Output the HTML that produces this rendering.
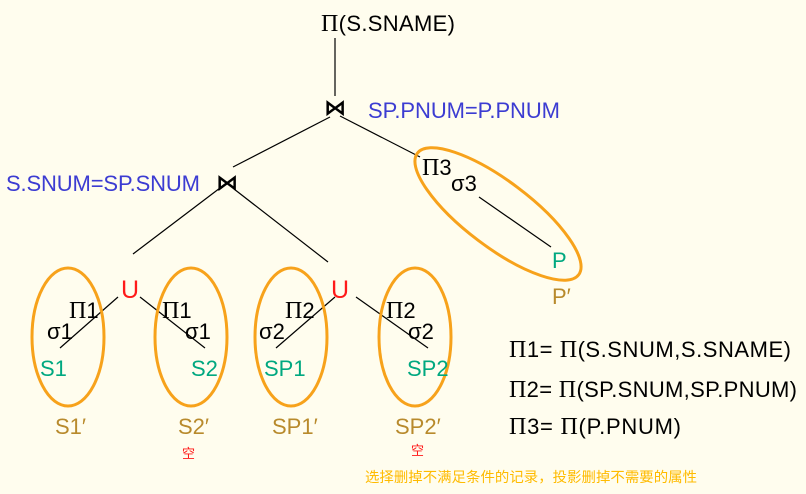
<!DOCTYPE html>
<html><head><meta charset="utf-8"><style>
html,body{margin:0;padding:0;background:#fffdee;}
svg{display:block;}
text{font-family:"Liberation Sans",sans-serif;}
.k{fill:#000;font-size:22px;}
.b{fill:#3c3cd2;font-size:22px;}
.g{fill:#00a880;font-size:22px;}
.o{fill:#b88a2c;font-size:22px;}
.pi{font-family:"Liberation Serif",serif;}
.bt{font-family:"DejaVu Sans",sans-serif;font-weight:bold;}
</style></head><body>
<svg width="806" height="494" viewBox="0 0 806 494" xmlns="http://www.w3.org/2000/svg">
<rect width="806" height="494" fill="#fffdee"/>
<g stroke="#000" stroke-width="1.2" fill="none">
<line x1="335" y1="38" x2="335" y2="96"/>
<line x1="330" y1="117" x2="233" y2="167"/>
<line x1="340" y1="116" x2="420" y2="157"/>
<line x1="220" y1="188" x2="133" y2="254"/>
<line x1="234" y1="189" x2="328" y2="262"/>
<line x1="479" y1="197" x2="551" y2="247"/>
<line x1="60" y1="348" x2="118" y2="297"/>
<line x1="140" y1="297" x2="205" y2="348"/>
<line x1="276" y1="348" x2="335" y2="297"/>
<line x1="356" y1="297" x2="428" y2="348"/>
</g>
<g stroke="#f7a21b" stroke-width="3" fill="none">
<ellipse cx="68" cy="337" rx="36" ry="69"/>
<ellipse cx="191" cy="337" rx="36" ry="69"/>
<ellipse cx="291" cy="337" rx="36" ry="69"/>
<ellipse cx="415" cy="337" rx="36" ry="69"/>
<ellipse cx="498" cy="214" rx="101" ry="33" transform="rotate(37 498 214)"/>
</g>
<text class="k" x="321" y="31" textLength="134"><tspan class="pi" font-size="24">Π</tspan>(S.SNAME)</text>
<text class="k bt" x="324" y="115" font-size="20">⋈</text>
<text class="k bt" x="216" y="190" font-size="20">⋈</text>
<text class="b" x="368" y="118" textLength="192">SP.PNUM=P.PNUM</text>
<text class="b" x="6" y="191" textLength="194">S.SNUM=SP.SNUM</text>
<text x="121" y="298" fill="#ff1a1a" font-size="25">U</text>
<text x="331" y="298" fill="#ff1a1a" font-size="25">U</text>
<text class="k" x="69" y="318"><tspan class="pi" font-size="24">Π</tspan>1</text>
<text class="k" x="47" y="339">σ1</text>
<text class="k" x="162" y="318"><tspan class="pi" font-size="24">Π</tspan>1</text>
<text class="k" x="185" y="339">σ1</text>
<text class="k" x="285" y="318"><tspan class="pi" font-size="24">Π</tspan>2</text>
<text class="k" x="259" y="339">σ2</text>
<text class="k" x="386" y="318"><tspan class="pi" font-size="24">Π</tspan>2</text>
<text class="k" x="408" y="339">σ2</text>
<text class="k" x="422" y="175"><tspan class="pi" font-size="24">Π</tspan>3</text>
<text class="k" x="451" y="191">σ3</text>
<text class="g" x="40" y="376">S1</text>
<text class="g" x="191" y="376">S2</text>
<text class="g" x="264" y="376">SP1</text>
<text class="g" x="407" y="376">SP2</text>
<text class="g" x="552" y="268">P</text>
<text class="o" x="552" y="304">P′</text>
<text class="o" x="55" y="434">S1′</text>
<text class="o" x="178" y="434">S2′</text>
<text class="o" x="272" y="434">SP1′</text>
<text class="o" x="395" y="434">SP2′</text>
<text x="182" y="458" fill="#ff1a1a" font-size="13" style="font-family:'Noto Sans CJK SC',sans-serif">空</text>
<text x="411" y="455" fill="#ff1a1a" font-size="13" style="font-family:'Noto Sans CJK SC',sans-serif">空</text>
<text class="k" x="509" y="357" textLength="282"><tspan class="pi" font-size="24">Π</tspan>1= <tspan class="pi" font-size="24">Π</tspan>(S.SNUM,S.SNAME)</text>
<text class="k" x="509" y="397" textLength="288"><tspan class="pi" font-size="24">Π</tspan>2= <tspan class="pi" font-size="24">Π</tspan>(SP.SNUM,SP.PNUM)</text>
<text class="k" x="509" y="434" textLength="172"><tspan class="pi" font-size="24">Π</tspan>3= <tspan class="pi" font-size="24">Π</tspan>(P.PNUM)</text>
<text x="365" y="482" fill="#ffbb00" font-size="14.4" textLength="332" style="font-family:'Noto Sans CJK SC',sans-serif">选择删掉不满足条件的记录，投影删掉不需要的属性</text>
</svg>
</body></html>
